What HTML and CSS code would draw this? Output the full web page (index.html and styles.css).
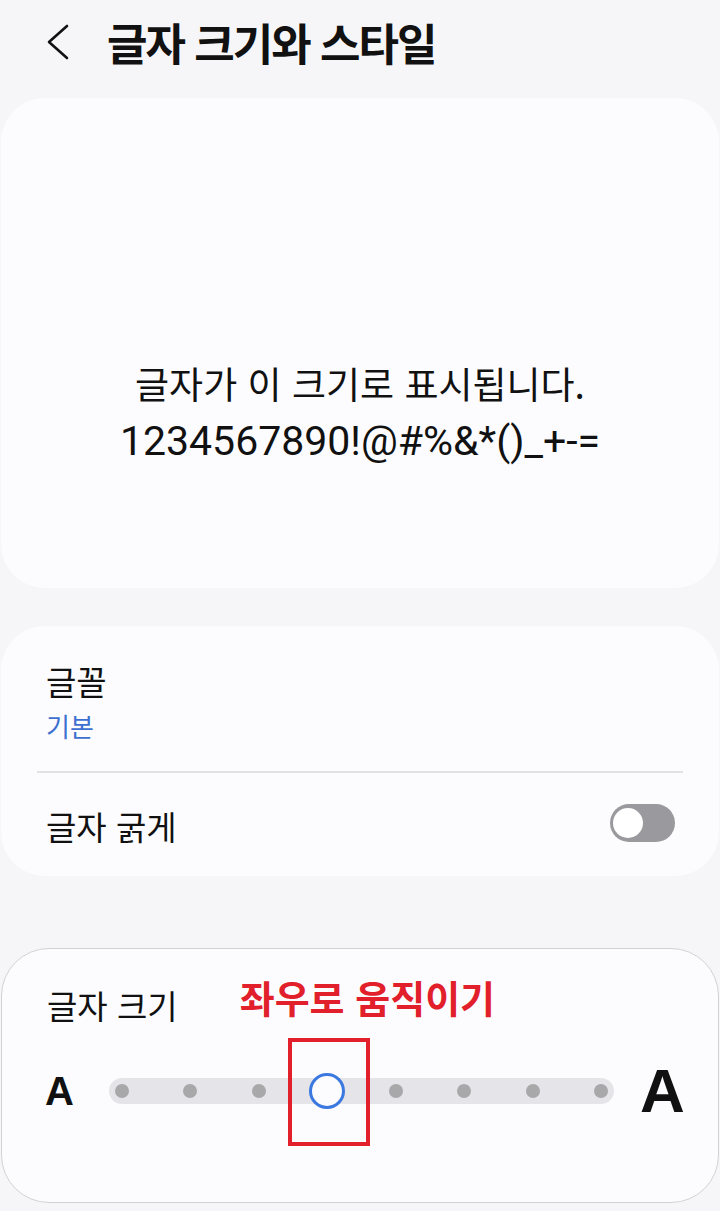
FILE: index.html
```html
<!DOCTYPE html>
<html lang="ko">
<head>
<meta charset="UTF-8">
<meta name="viewport" content="width=device-width, initial-scale=1.0">
<title>글자 크기와 스타일</title>
<link rel="stylesheet" href="styles.css">
</head>
<body>
<header class="topbar">
  <svg class="back" width="24" height="36" viewBox="0 0 24 36">
    <polyline points="21,2 3,18 21,34" fill="none" stroke="#111" stroke-width="2.6" stroke-linecap="round" stroke-linejoin="round"/>
  </svg>
  <h1 class="title">글자 크기와 스타일</h1>
</header>

<section class="card preview">
  <p>글자가 이 크기로 표시됩니다.</p>
  <p class="chars">1234567890!@#%&amp;*()_+-=</p>
</section>

<section class="card settings">
  <div class="row font-row">
    <div class="label">글꼴</div>
    <div class="value">기본</div>
  </div>
  <div class="divider"></div>
  <div class="row bold-row">
    <div class="label">글자 굵게</div>
    <span class="toggle"><span class="knob"></span></span>
  </div>
</section>

<section class="card size">
  <div class="size-head">
    <span class="label">글자 크기</span>
    <span class="hint">좌우로 움직이기</span>
  </div>
  <div class="slider-row">
    <span class="a-small">A</span>
    <div class="track">
      <span class="dot"></span>
      <span class="dot"></span>
      <span class="dot"></span>
      <span class="thumb"><span class="mark"></span></span>
      <span class="dot"></span>
      <span class="dot"></span>
      <span class="dot"></span>
      <span class="dot"></span>
    </div>
    <span class="a-big">A</span>
  </div>
</section>
</body>
</html>
```

FILE: styles.css
```css
body {
  margin: 0;
  background: #f6f6f8;
  font-family: "Noto Sans CJK KR", "Noto Sans", sans-serif;
  color: #111;
}
.topbar {
  display: flex;
  align-items: center;
  height: 84px;
  padding-left: 46px;
  margin-bottom: 14px;
}
.back {
  display: block;
}
.title {
  margin: 0 0 0 37px;
  font-size: 44px;
  font-weight: 700;
  letter-spacing: -2px;
}
.card {
  background: #fcfcfe;
  border-radius: 44px;
  margin: 0 1px;
}
.preview {
  box-sizing: border-box;
  height: 490px;
  padding-top: 258px;
  text-align: center;
  font-size: 37px;
}
.preview p {
  margin: 0;
  line-height: 55px;
}
.preview .chars {
  margin-top: 3px;
  font-family: Roboto, "Noto Sans", sans-serif;
  font-size: 41px;
}
.settings {
  margin-top: 38px;
  padding: 33px 0 28px;
}
.row {
  padding: 0 44px 0 45px;
}
.label {
  font-size: 33px;
  line-height: 44px;
}
.value {
  font-size: 26px;
  color: #3e70cf;
  line-height: 46px;
}
.font-row {
  padding-bottom: 22px;
}
.divider {
  height: 2px;
  background: #e2e2e6;
  margin: 0 36px;
}
.bold-row {
  display: flex;
  align-items: center;
  justify-content: space-between;
  padding-top: 31px;
}
.toggle {
  position: relative;
  width: 65px;
  height: 38px;
  margin-bottom: 6px;
  border-radius: 19px;
  background: #9a9a9e;
}
.knob {
  position: absolute;
  left: 3px;
  top: 4px;
  width: 30px;
  height: 30px;
  border-radius: 50%;
  background: #fff;
}
.size {
  margin-top: 72px;
  height: 255px;
  border: 1.5px solid #d2d2d6;
  border-radius: 48px;
  box-sizing: border-box;
  padding-top: 34px;
}
.size-head {
  display: flex;
  align-items: center;
  padding-left: 45px;
}
.hint {
  margin-left: 62px;
  margin-top: -16px;
  font-size: 38px;
  line-height: 50px;
  font-weight: 700;
  color: #e1202b;
}
.slider-row {
  display: flex;
  align-items: center;
  margin-top: 33px;
  padding-left: 43px;
}
.a-small,
.a-big {
  font-family: "Liberation Sans", Arial, sans-serif;
  font-weight: 700;
  line-height: 1;
}
.a-small {
  width: 64px;
  font-size: 40px;
}
.a-big {
  margin-left: 26px;
  font-size: 62px;
}
.track {
  display: flex;
  align-items: center;
  justify-content: space-between;
  width: 505px;
  height: 26px;
  padding: 0 6px;
  box-sizing: border-box;
  border-radius: 13px;
  background: #e5e5e9;
}
.dot {
  width: 14px;
  height: 14px;
  border-radius: 50%;
  background: #a8a8ab;
}
.thumb {
  position: relative;
  width: 36px;
  height: 36px;
  margin: 0 -11px;
  box-sizing: border-box;
  border: 3.5px solid #3b78e0;
  border-radius: 50%;
  background: #fcfcfe;
}
.mark {
  position: absolute;
  left: -24.5px;
  top: -38.5px;
  width: 82px;
  height: 108px;
  box-sizing: border-box;
  border: 4px solid #e1202b;
}
```
